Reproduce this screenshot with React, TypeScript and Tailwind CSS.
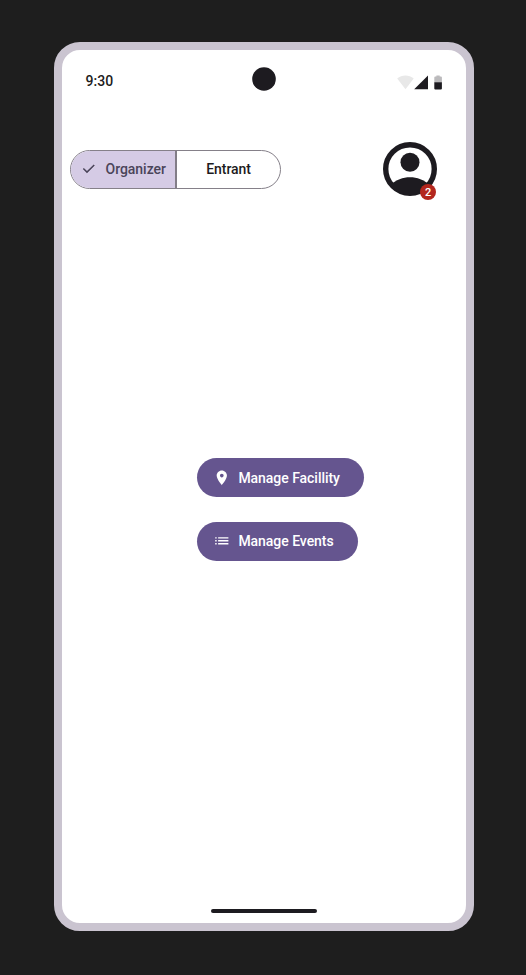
const label = "text-[14px] leading-5 font-medium tracking-[-0.04px] whitespace-nowrap";

function StatusBar() {
  return (
    <div className="grid h-[51px] grid-cols-[1fr_auto_1fr] items-start pr-[22.3px] pl-[23.3px]">
      <div className="mt-[21px] text-[14px] leading-5 font-medium text-[#1d1b20]">9:30</div>
      <svg className="mt-[17.5px] size-[24px]" viewBox="0 0 24 24">
        <circle cx="12" cy="12" r="11.8" fill="#1d1b20" />
      </svg>
      <svg className="mt-[25px] h-[16px] w-[46px] justify-self-end" viewBox="0 0 46 16">
        <path d="M.2 3.6C4.7-.4 12.2-.4 16.7 3.6L8.5 14.3Z" fill="#e8e8e8" />
        <path d="M17.2 14.3H31V.4Z" fill="#1d1b20" />
        <path d="M37.3 7.5V2.5q0-1 1-1H39.4V.4h3.3V1.5H43.9q1 0 1 1V7.5Z" fill="#bbbabc" />
        <path d="M37.3 7.3H44.9V13.4q0 1-1 1H38.3q-1 0-1-1Z" fill="#1d1b20" />
      </svg>
    </div>
  );
}

function RoleSwitch() {
  return (
    <div className="mt-[8px] flex h-[39px] w-[211.2px] overflow-hidden rounded-full border border-[#858089]">
      <button className="flex w-[106px] items-center border-r-2 border-[#827d87] bg-[#d5cbe5] pb-[2px] pl-[9px] text-[#4a4459]">
        <svg className="mr-[8px] size-[17.6px] shrink-0" viewBox="0 0 24 24" fill="currentColor">
          <path d="M9.55 18 3.85 12.3 5.275 10.875 9.55 15.15 18.725 5.975 20.15 7.4Z" />
        </svg>
        <span className={label}>Organizer</span>
      </button>
      <button className="flex-1 pb-[2px] text-[#1d1b20]">
        <span className={label}>Entrant</span>
      </button>
    </div>
  );
}

function Profile() {
  return (
    <div className="relative size-[54px]">
      <svg className="size-[54px]" viewBox="0 0 54 54">
        <defs>
          <clipPath id="profile-disc">
            <circle cx="27" cy="27" r="26" />
          </clipPath>
        </defs>
        <circle cx="27" cy="27" r="24.3" fill="none" stroke="#1d1b20" strokeWidth="5.4" />
        <circle cx="27" cy="20.3" r="9.5" fill="#1d1b20" />
        <path d="M7 43C19 32.5 35 32.5 47 43V54H7Z" fill="#1d1b20" clipPath="url(#profile-disc)" />
      </svg>
      <div className="absolute top-[42px] left-[37.2px] flex size-[16px] items-center justify-center rounded-full bg-[#b3261e] pt-px text-[11px] leading-none font-medium text-white">
        2
      </div>
    </div>
  );
}

export default function App() {
  return (
    <div className="flex h-[975px] w-[526px] items-start bg-[#1e1e1e] pt-[41.5px] pl-[54.3px] font-['Roboto',sans-serif]">
      <div className="flex h-[889.5px] w-[419.3px] flex-col rounded-[26px] border-[8px] border-[#cac4d0] bg-white">
        <StatusBar />
        <div className="mt-[41.5px] flex items-start justify-between pr-[28.7px] pl-[7.7px]">
          <RoleSwitch />
          <Profile />
        </div>
        <div className="mt-[262px] ml-[135px] flex flex-col items-start gap-[24.6px]">
          <button className="flex h-[39px] w-[166.6px] items-center rounded-full bg-[#65558f] pl-[15.7px] text-white">
            <svg className="mr-[7.8px] size-[17.6px] shrink-0" viewBox="0 0 24 24" fill="currentColor">
              <path d="M12 2C8.13 2 5 5.13 5 9c0 5.25 7 13 7 13s7-7.75 7-13c0-3.87-3.13-7-7-7zm0 9.5c-1.38 0-2.5-1.12-2.5-2.5s1.12-2.5 2.5-2.5 2.5 1.12 2.5 2.5-1.12 2.5-2.5 2.5z" />
            </svg>
            <span className={label}>Manage Facillity</span>
          </button>
          <button className="flex h-[39px] w-[160.7px] items-center rounded-full bg-[#65558f] pl-[15.7px] text-white">
            <svg className="mr-[7.8px] size-[17.6px] shrink-0" viewBox="0 0 24 24" fill="currentColor">
              <path d="M3 9V7h2v2zm0 4v-2h2v2zm0 4v-2h2v2zM7 9V7h14v2zm0 4v-2h14v2zm0 4v-2h14v2z" />
            </svg>
            <span className={label}>Manage Events</span>
          </button>
        </div>
        <div className="mt-auto mb-[9.7px] h-[4px] w-[106px] self-center rounded-full bg-[#1d1b20]" />
      </div>
    </div>
  );
}
